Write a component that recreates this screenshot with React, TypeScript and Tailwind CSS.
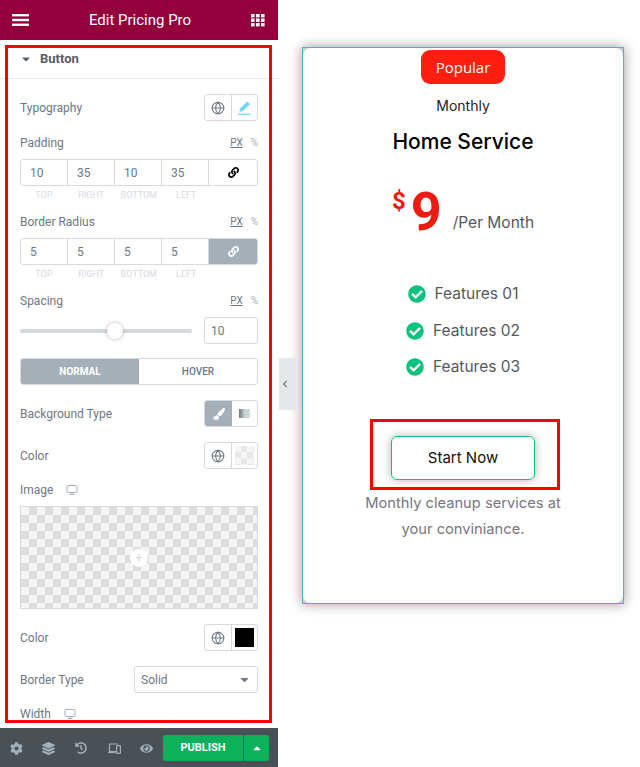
import { FaCaretDown, FaCaretUp, FaCheckCircle, FaChevronLeft, FaCog, FaEye, FaHistory, FaLayerGroup, FaLink, FaPaintBrush } from "react-icons/fa"
import { Globe, Monitor } from "lucide-react"

const checker = "bg-[conic-gradient(#dddddd_25%,#f5f5f5_0_50%,#dddddd_0_75%,#f5f5f5_0)]"
const paleChecker = "bg-[conic-gradient(#e8e8e8_25%,#f6f6f6_0_50%,#e8e8e8_0_75%,#f6f6f6_0)]"

function Label({ text }: { text: string }) {
    return <span className="text-[12px] leading-[14px] text-[#6d7882]">{text}</span>
}

function Units() {
    return (
        <div className="flex gap-[8px] text-[10px] leading-[14px] text-[#a4afb7]">
            <span className="underline text-[#6d7882]">PX</span>
            <span>%</span>
        </div>
    )
}

function GlobeCell() {
    return (
        <div className="flex w-[27px] items-center justify-center border-r border-[#d5dadf]">
            <Globe size={14} strokeWidth={1.8} className="text-[#6d7882]" />
        </div>
    )
}

function Dimensions({ values, linked }: { values: string[]; linked?: boolean }) {
    const captions = ["TOP", "RIGHT", "BOTTOM", "LEFT"]
    return (
        <div className="mt-[9px]">
            <div className="flex h-[27px] overflow-hidden rounded-[3px] border border-[#d5dadf] text-[12px] text-[#6d7882]">
                {values.map((v, i) => (
                    <div key={i} className="flex w-[47px] items-center border-r border-[#d5dadf] pl-[9px]">{v}</div>
                ))}
                <div className={linked ? "flex flex-1 items-center justify-center bg-[#a4afb7] text-white" : "flex flex-1 items-center justify-center text-black"}>
                    <FaLink size={11} />
                </div>
            </div>
            <div className="mt-1 flex h-[10px] text-[9px] leading-[10px] text-[#d5dadf]">
                {captions.map(c => (
                    <div key={c} className="w-[47.5px] text-center">{c}</div>
                ))}
            </div>
        </div>
    )
}

function LabelRow({ text }: { text: string }) {
    return (
        <div className="mt-[15px] flex h-[14px] items-center justify-between">
            <Label text={text} />
            <Units />
        </div>
    )
}

function ColorRow({ swatch }: { swatch: string }) {
    return (
        <div className="mt-[15px] flex h-[27px] items-center justify-between">
            <Label text="Color" />
            <div className="flex h-[27px] w-[54px] overflow-hidden rounded-[3px] border border-[#d5dadf]">
                <GlobeCell />
                <div className="flex flex-1 items-center justify-center">
                    <div className={swatch} />
                </div>
            </div>
        </div>
    )
}

function Panel() {
    return (
        <div className="flex h-[767px] w-[278px] shrink-0 flex-col bg-white">
            <div className="flex h-10 shrink-0 items-center justify-between bg-[#93003c] pl-3 pr-[13px] text-white">
                <svg width="17" height="12" viewBox="0 0 17 12" fill="white">
                    <rect width="17" height="2.4" y="0" />
                    <rect width="17" height="2.4" y="4.8" />
                    <rect width="17" height="2.4" y="9.6" />
                </svg>
                <span className="text-[15px] font-normal">Edit Pricing Pro</span>
                <svg width="14" height="13" viewBox="0 0 14 13" fill="white">
                    {[0, 5, 10].map(x => [0, 4.5, 9].map(y => (
                        <rect key={`${x}-${y}`} x={x} y={y} width="3.6" height="3.4" />
                    )))}
                </svg>
            </div>

            <div className="relative flex-1 overflow-hidden">
                <div className="flex h-[39px] items-center border-b border-[#e6e9ec] pl-5 text-[13px] font-bold text-[#556068]">
                    <FaCaretDown size={12} className="text-[#556068]" />
                    <span className="ml-2">Button</span>
                </div>
                <div className="px-5">
                    <div className="mt-[15px] flex h-[27px] items-center justify-between">
                        <Label text="Typography" />
                        <div className="flex h-[27px] w-[54px] overflow-hidden rounded-[3px] border border-[#d5dadf]">
                            <GlobeCell />
                            <div className="flex flex-1 flex-col items-center justify-center text-[#71d7f7]">
                                <svg width="13" height="14" viewBox="0 0 13 14" fill="currentColor">
                                    <path d="M9.2 0.6 12 3.2 4.6 10.2 1.4 10.8 2 7.6Z" />
                                    <rect x="0" y="12.6" width="13" height="1.2" />
                                </svg>
                            </div>
                        </div>
                    </div>

                    <LabelRow text="Padding" />
                    <Dimensions values={["10", "35", "10", "35"]} />
                    <LabelRow text="Border Radius" />
                    <Dimensions values={["5", "5", "5", "5"]} linked />
                    <LabelRow text="Spacing" />

                    <div className="mt-[9px] flex h-[27px] items-center justify-between">
                        <div className="relative h-1 w-[172px] rounded-full bg-[#d5dadf]">
                            <div className="absolute left-[87px] top-[-6px] h-4 w-4 rounded-full bg-white shadow-[0_0_4px_rgba(0,0,0,0.3)]" />
                        </div>
                        <div className="flex h-[27px] w-[54px] items-center rounded-[3px] border border-[#d5dadf] pl-[6px] text-[12px] text-[#6d7882]">10</div>
                    </div>

                    <div className="mt-[14px] flex h-[27px] overflow-hidden rounded-[3px] border border-[#d5dadf] text-[10px] font-bold">
                        <div className="flex w-[118px] items-center justify-center bg-[#a4afb7] text-white">NORMAL</div>
                        <div className="flex flex-1 items-center justify-center font-medium text-[#6d7882]">HOVER</div>
                    </div>

                    <div className="mt-[15px] flex h-[27px] items-center justify-between">
                        <Label text="Background Type" />
                        <div className="flex h-[27px] w-[54px] overflow-hidden rounded-[3px] border border-[#d5dadf]">
                            <div className="flex w-[27px] items-center justify-center bg-[#a4afb7] text-white">
                                <FaPaintBrush size={12} />
                            </div>
                            <div className="flex flex-1 items-center justify-center">
                                <div className="h-[9px] w-[11px] bg-gradient-to-r from-[#6d7882] via-[#c8ced3] to-[#cfe3d3]" />
                            </div>
                        </div>
                    </div>

                    <ColorRow swatch={`h-[19px] w-[19px] ${paleChecker} bg-[length:12px_12px]`} />

                    <div className="mt-[14px] flex h-[14px] items-center gap-[13px]">
                        <Label text="Image" />
                        <Monitor size={12} className="text-[#a4afb7]" />
                    </div>

                    <div className={`mt-[9px] flex h-[103px] items-center justify-center border border-[#d5dadf] ${checker} bg-[length:16px_16px]`}>
                        <div className="flex h-[18px] w-[18px] items-center justify-center rounded-full bg-white text-[12px] leading-none text-[#d5dadf]">+</div>
                    </div>

                    <ColorRow swatch="h-[19px] w-[19px] bg-black" />

                    <div className="mt-[15px] flex h-[27px] items-center justify-between">
                        <Label text="Border Type" />
                        <div className="flex h-[27px] w-[124px] items-center justify-between rounded-[3px] border border-[#d5dadf] pl-[6px] pr-[6px] text-[12px] text-[#6d7882]">
                            <span>Solid</span>
                            <FaCaretDown size={13} />
                        </div>
                    </div>

                    <div className="mt-[14px] flex h-[14px] items-center gap-[13px]">
                        <Label text="Width" />
                        <Monitor size={12} className="text-[#a4afb7]" />
                    </div>
                </div>
                <div className="pointer-events-none absolute left-[5px] top-[5px] h-[678px] w-[267px] border-[3px] border-[#ff0000]" />
            </div>

            <div className="flex h-[39px] shrink-0 items-center bg-[#495157] pt-[1px]">
                <div className="grid w-[163px] grid-cols-5 items-center justify-items-center text-[#a4afb7]">
                    <FaCog size={13} />
                    <FaLayerGroup size={13} />
                    <FaHistory size={12} />
                    <svg width="13" height="11" viewBox="0 0 13 11" fill="none" stroke="currentColor" strokeWidth="1.2">
                        <path d="M8 8.5H1.5V1H10" />
                        <rect x="8.6" y="2.6" width="3.8" height="7.8" rx="0.5" />
                        <path d="M0 9.5H7.5" />
                    </svg>
                    <FaEye size={13} />
                </div>
                <div className="flex h-[26px] w-[106px] overflow-hidden rounded-[3px] text-white">
                    <div className="flex w-20 items-center justify-center bg-[#0db05b] text-[11px] font-bold">PUBLISH</div>
                    <div className="flex flex-1 items-center justify-center border-l border-[#495157] bg-[#0db05b]">
                        <FaCaretUp size={12} />
                    </div>
                </div>
            </div>
        </div>
    )
}

function Feature({ label }: { label: string }) {
    return (
        <div className="flex h-[18px] items-center gap-[9px]">
            <FaCheckCircle size={18} className="text-[#0ec27e]" />
            <span className="text-[15.5px] text-[#54595f]">{label}</span>
        </div>
    )
}

function Card() {
    return (
        <div className="mt-[47px] ml-6 h-[557px] w-[322px] border border-[#4fb0cf] bg-[#d0d0d0] shadow-[0_0_12px_rgba(0,0,0,0.4)] font-['Inter',sans-serif]">
            <div className="flex h-full flex-col items-center rounded-lg bg-white">
                <div className="mt-[2px] flex h-[34px] w-[84px] items-center justify-center rounded-[9px] bg-[#ff1f10] font-['Open_Sans',sans-serif] text-[15px] text-white">Popular</div>
                <div className="mt-[12px] text-[14px] leading-[20px] text-[#222222]">Monthly</div>
                <div className="mt-[11px] text-[21px] font-medium leading-[30px] text-black">Home Service</div>
                <div className="mt-[24px] flex h-[62px] items-start font-['Roboto',sans-serif] text-[#ee1c10]">
                    <span className="mt-[5px] text-[24px] font-bold leading-[30px]">$</span>
                    <span className="ml-[5px] text-[54px] font-bold leading-[62px]">9</span>
                    <span className="ml-[11px] mt-[30px] font-['Inter',sans-serif] text-[15.5px] leading-[24px] text-[#54595f]">/Per Month</span>
                </div>
                <div className="mt-[42px] flex flex-col items-center gap-[18.5px]">
                    <Feature label="Features 01" />
                    <Feature label="Features 02" />
                    <Feature label="Features 03" />
                </div>
                <div className="mt-[43px] ml-1 flex h-[71px] w-[190px] justify-center border-[3px] border-[#ff0000] pr-1 pt-[14px]">
                    <div className="flex h-11 w-[144px] items-center justify-center rounded-md border border-[#0ec27e] text-[15px] text-[#111111] shadow-[0_0_10px_rgba(0,0,0,0.3)]">Start Now</div>
                </div>
                <div className="text-center text-[14.7px] leading-[26px] text-[#77777f]">
                    Monthly cleanup services at<br />your conviniance.
                </div>
            </div>
        </div>
    )
}

export default function App() {
    return (
        <div className="relative flex h-[767px] w-[640px] overflow-hidden bg-white font-['Roboto',sans-serif]">
            <Panel />
            <div className="absolute left-[279px] top-[358px] flex h-[52px] w-[18px] items-center justify-center bg-[#e6e9ec] pr-[6px] text-[#6d7882]">
                <FaChevronLeft size={8} />
            </div>
            <Card />
        </div>
    )
}
